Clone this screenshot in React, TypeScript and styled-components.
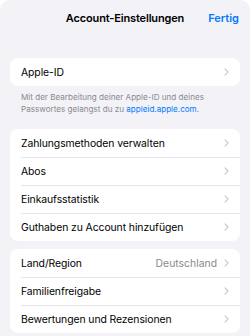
import styled, { createGlobalStyle } from "styled-components";

const Global = createGlobalStyle`
  html, body {
    margin: 0;
    padding: 0;
    background: #ffffff;
  }
  body {
    font-family: Inter, "Liberation Sans", sans-serif;
    -webkit-font-smoothing: antialiased;
  }
`;

const Sheet = styled.div`
  width: 250px;
  height: 336px;
  background: #f2f2f7;
  border-radius: 10px 10px 0 0;
  overflow: hidden;
  box-sizing: border-box;
  padding: 0 10px;
`;

const Header = styled.div`
  height: 36px;
  display: grid;
  grid-template-columns: 1fr auto 1fr;
  align-items: center;
  margin: 0 -10px;
  padding: 0 11px;
`;

const Title = styled.div`
  grid-column: 2;
  font-size: 11px;
  font-weight: 600;
  color: #000;
  letter-spacing: -0.15px;
`;

const Done = styled.div`
  justify-self: end;
  font-size: 11px;
  font-weight: 600;
  color: #007aff;
`;

const Card = styled.div<{ $top: number }>`
  margin-top: ${(p) => p.$top}px;
  background: #fff;
  border-radius: 8px;
  overflow: hidden;
`;

const Row = styled.div`
  height: 28px;
  display: flex;
  align-items: center;
  padding-left: 11px;
  position: relative;
  & + &::before {
    content: "";
    position: absolute;
    top: 0;
    left: 11px;
    right: 0;
    height: 1px;
    background: #e6e6ea;
  }
`;

const Label = styled.span`
  flex: 1;
  font-size: 10.4px;
  color: #000;
  letter-spacing: -0.08px;
`;

const Value = styled.span`
  font-size: 10.4px;
  color: #8a8a8e;
  margin-right: 7px;
`;

const ChevronBox = styled.span`
  width: 16px;
  display: flex;
  justify-content: flex-start;
`;

const Footer = styled.p`
  margin: 6px 0 0;
  padding: 0 11px;
  font-size: 8.1px;
  line-height: 11.5px;
  color: #8a8a8e;
  a {
    color: #007aff;
    text-decoration: none;
  }
`;

function Chevron() {
  return (
    <ChevronBox>
      <svg width="5" height="8" viewBox="0 0 5 8">
        <path
          d="M1 0.8 L4 4 L1 7.2"
          fill="none"
          stroke="#c7c7cc"
          strokeWidth="1.1"
          strokeLinecap="round"
          strokeLinejoin="round"
        />
      </svg>
    </ChevronBox>
  );
}

function Item({ label, value }: { label: string; value?: string }) {
  return (
    <Row>
      <Label>{label}</Label>
      {value && <Value>{value}</Value>}
      <Chevron />
    </Row>
  );
}

export default function App() {
  return (
    <>
      <Global />
      <Sheet>
        <Header>
          <Title>Account-Einstellungen</Title>
          <Done>Fertig</Done>
        </Header>
        <Card $top={22}>
          <Item label="Apple-ID" />
        </Card>
        <Footer>
          Mit der Bearbeitung deiner Apple-ID und deines
          <br />
          Passwortes gelangst du zu <a href="#">appleid.apple.com</a>.
        </Footer>
        <Card $top={14}>
          <Item label="Zahlungsmethoden verwalten" />
          <Item label="Abos" />
          <Item label="Einkaufsstatistik" />
          <Item label="Guthaben zu Account hinzufügen" />
        </Card>
        <Card $top={8}>
          <Item label="Land/Region" value="Deutschland" />
          <Item label="Familienfreigabe" />
          <Item label="Bewertungen und Rezensionen" />
        </Card>
      </Sheet>
    </>
  );
}
